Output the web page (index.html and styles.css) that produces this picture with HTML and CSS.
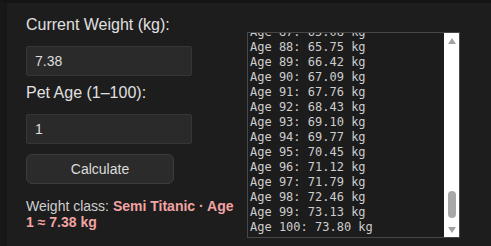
FILE: index.html
```html
<!DOCTYPE html>
<html lang="en">

<head>
    <meta charset="UTF-8">
    <meta name="viewport" content="width=device-width, initial-scale=1.0">
    <title>Pet Weight Growth</title>
    <link rel="stylesheet" href="styles.css">
</head>

<body>
    <div class="calc">
        <!-- inputs -->
        <div class="calc-form">
            <label class="field-label" for="weight">Current Weight (kg):</label>
            <input class="field-input" id="weight" type="text" value="7.38">

            <label class="field-label field-label-2" for="age">Pet Age (1–100):</label>
            <input class="field-input" id="age" type="text" value="1">

            <button class="calc-btn" id="calcBtn" type="button">Calculate</button>

            <p class="result">Weight class: <strong id="resultText">Semi Titanic · Age 1 ≈ 7.38 kg</strong></p>
        </div>

        <!-- growth table -->
        <div class="list-box">
            <textarea class="growth-list" id="growthList" readonly></textarea>
            <div class="scrollbar" aria-hidden="true">
                <div class="scroll-btn"><span class="arrow-up"></span></div>
                <div class="scroll-track"><div class="scroll-thumb"></div></div>
                <div class="scroll-btn"><span class="arrow-down"></span></div>
            </div>
        </div>
    </div>

    <script src="script.js"></script>
</body>

</html>
```

FILE: styles.css
```css
html,
body {
    margin: 0;
    height: 100%;
}

body {
    background-color: #1d1d1d;
    border-top: 3px solid #141414;
    border-left: 7px solid #171717;
    box-sizing: border-box;
    font-family: "Liberation Sans", Arial, sans-serif;
    color: #dcdcdc;
}

/* outer layout */
.calc {
    display: flex;
    align-items: flex-start;
    gap: 11px;
    padding: 12px 0 0 19px;
}

.calc-form {
    width: 210px;
}

.field-label {
    display: block;
    font-size: 16px;
    line-height: 20px;
    color: #e0e0e0;
}

.field-label-2 {
    margin-top: 7px;
}

.field-input {
    display: block;
    box-sizing: border-box;
    width: 166px;
    height: 30px;
    margin-top: 11px;
    padding: 0 8px;
    background-color: #2a2a2a;
    border: 1px solid #363636;
    border-radius: 2px;
    font-family: "Liberation Sans", Arial, sans-serif;
    font-size: 14px;
    color: #dedede;
    outline: none;
}

.calc-btn {
    display: block;
    box-sizing: border-box;
    width: 148px;
    height: 30px;
    margin-top: 10px;
    background-color: #2b2b2b;
    border: 1px solid #3c3c3c;
    border-radius: 6px;
    font-family: "Liberation Sans", Arial, sans-serif;
    font-size: 14px;
    color: #dcdcdc;
    cursor: pointer;
}

.result {
    margin: 14px 0 0;
    font-size: 14px;
    line-height: 16px;
    color: #cfcfcf;
}

.result strong {
    color: #f2a3a3;
}

/* textarea with the list + classic scrollbar */
.list-box {
    display: flex;
    box-sizing: border-box;
    width: 213px;
    height: 206px;
    margin-top: 17px;
    border: 1px solid #474747;
    background-color: #1c1c1c;
}

.growth-list {
    flex: 1;
    box-sizing: border-box;
    margin: 0;
    padding: 0 0 2px 2px;
    background-color: transparent;
    border: none;
    font-family: "DejaVu Sans Mono", Consolas, monospace;
    font-size: 12px;
    line-height: 15px;
    color: #cdcdcd;
    resize: none;
    outline: none;
    overflow: hidden;
}

.scrollbar {
    display: flex;
    flex-direction: column;
    width: 15px;
    background-color: #ffffff;
}

.scroll-btn {
    display: flex;
    align-items: center;
    justify-content: center;
    height: 15px;
}

.arrow-up,
.arrow-down {
    width: 0;
    height: 0;
    border-left: 4px solid transparent;
    border-right: 4px solid transparent;
}

.arrow-up {
    border-bottom: 6px solid #a3a3a3;
}

.arrow-down {
    border-top: 6px solid #a3a3a3;
}

.scroll-track {
    flex: 1;
    display: flex;
    flex-direction: column;
    justify-content: flex-end;
    align-items: center;
    padding-bottom: 4px;
}

.scroll-thumb {
    width: 8px;
    height: 27px;
    border-radius: 4px;
    background-color: #a8a8a8;
}
```

FILE: script.js
```js
const weightInput = document.getElementById('weight');
const ageInput = document.getElementById('age');
const calcBtn = document.getElementById('calcBtn');
const resultText = document.getElementById('resultText');
const growthList = document.getElementById('growthList');

// adult weight at age 100 is 10x the base weight
function buildList() {
    const weight = parseFloat(weightInput.value) || 0;
    const age = parseInt(ageInput.value, 10) || 1;
    const rate = (weight * 9) / 99;

    const lines = [];
    for (let i = 1; i <= 100; i++) {
        lines.push('Age ' + i + ': ' + (weight + (i - 1) * rate).toFixed(2) + ' kg');
    }
    growthList.value = lines.join('\n');
    growthList.scrollTop = growthList.scrollHeight;

    resultText.textContent = 'Semi Titanic · Age ' + age + ' ≈ ' + weight.toFixed(2) + ' kg';
}

calcBtn.addEventListener('click', buildList);
buildList();
```
